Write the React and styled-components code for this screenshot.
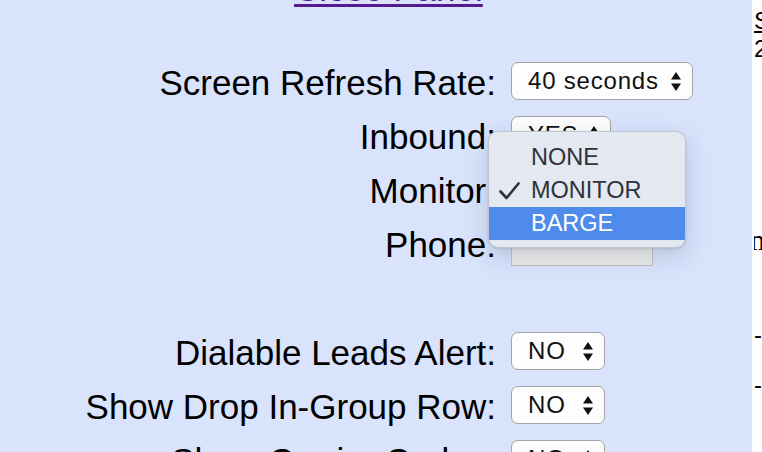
import React from "react";
import styled, { createGlobalStyle } from "styled-components";

const Global = createGlobalStyle`
  html, body { margin: 0; padding: 0; background: #ffffff; overflow: hidden; }
  body { font-family: "Liberation Sans", Arial, sans-serif; }
`;

const Page = styled.div`
  display: flex;
  width: 762px;
  height: 452px;
  overflow: hidden;
`;

const Panel = styled.div`
  width: 752px;
  flex: 0 0 752px;
  background: #d9e3fc;
  overflow: hidden;
`;

const Scroller = styled.div`
  margin-top: -31px;
  display: flex;
  flex-direction: column;
`;

const CloseRow = styled.div`
  height: 40px;
  padding-left: 294px;
  margin-bottom: 47px;
  font-size: 35px;
  line-height: 40px;
`;

const CloseLink = styled.a`
  color: #551a8b;
  text-decoration: underline;
  text-decoration-thickness: 3px;
  text-underline-offset: 3px;
  cursor: pointer;
`;

const Form = styled.div`
  display: grid;
  grid-template-columns: 496px 1fr;
  column-gap: 15px;
  grid-auto-rows: 54px;
  align-items: center;
`;

const Label = styled.div`
  text-align: right;
  font-size: 35px;
  line-height: 40px;
  color: #000;
  white-space: nowrap;
`;

const Cell = styled.div`
  position: relative;
  display: flex;
  align-items: center;
  height: 100%;
`;

const SelectBox = styled.div`
  box-sizing: border-box;
  width: ${(p) => p.$w}px;
  height: 38px;
  margin-bottom: 4px;
  display: flex;
  align-items: center;
  justify-content: space-between;
  padding: 0 11px 0 16px;
  border: 1.5px solid #a3a3a3;
  border-radius: 7px;
  background: #fdfdfd;
  font-size: 24px;
  letter-spacing: 0.8px;
  color: #111;
  white-space: nowrap;
`;

const PhoneInput = styled.div`
  box-sizing: border-box;
  width: 142px;
  height: 39px;
  margin-top: 3px;
  background: #ebebeb;
  border: 1px solid #c2c2c2;
  border-top-color: #b0b0b0;
`;

const Menu = styled.div`
  position: absolute;
  left: -23px;
  top: -33px;
  width: 198px;
  box-sizing: border-box;
  padding: 9px 0 7px;
  background: #e3e8f1;
  border: 1px solid rgba(120, 130, 150, 0.35);
  border-radius: 10px;
  box-shadow: 0 8px 24px rgba(40, 50, 80, 0.18), 0 1px 3px rgba(0, 0, 0, 0.12);
  z-index: 5;
  overflow: hidden;
`;

const MenuItem = styled.div`
  height: 33px;
  display: flex;
  align-items: center;
  padding-left: 10px;
  font-size: 23.5px;
  color: ${(p) => (p.$active ? "#ffffff" : "#2d323c")};
  background: ${(p) => (p.$active ? "#4f8bea" : "transparent")};
`;

const CheckSlot = styled.span`
  width: 32px;
  display: flex;
  align-items: center;
`;

const Side = styled.div`
  flex: 1;
  background: #ffffff;
  overflow: hidden;
  font-family: "Liberation Sans", Arial, sans-serif;
  padding-top: 7px;
  display: flex;
  flex-direction: column;
  margin-left: 2px;
`;

const SideLink = styled.span`
  font-size: 24px;
  line-height: 28px;
  text-decoration: underline;
  color: #000;
`;

const SideText = styled.span`
  font-size: ${(p) => p.$size || 24}px;
  line-height: ${(p) => (p.$size || 24) + 4}px;
  color: #000;
  margin-top: ${(p) => p.$mt || 0}px;
  margin-left: ${(p) => p.$ml || 0}px;
  font-family: ${(p) => (p.$serif ? '"Liberation Serif", "Times New Roman", serif' : "inherit")};
`;

const Arrows = () => (
  <svg width="10" height="19" viewBox="0 0 10 19">
    <polygon points="5,0 10,7.5 0,7.5" fill="#111" />
    <polygon points="0,11.5 10,11.5 5,19" fill="#111" />
  </svg>
);

const Check = () => (
  <svg width="21" height="18" viewBox="0 0 21 18">
    <polyline points="1.5,9.5 7.5,16 19.5,1.5" fill="none" stroke="#2d323c" strokeWidth="2.6" strokeLinecap="round" strokeLinejoin="round" />
  </svg>
);

const Select = ({ value, w }) => (
  <SelectBox $w={w}>
    <span>{value}</span>
    <Arrows />
  </SelectBox>
);

const options = ["NONE", "MONITOR", "BARGE"];

export default function App() {
  return (
    <>
      <Global />
      <Page>
        <Panel>
          <Scroller>
            <CloseRow>
              <CloseLink>Close Panel</CloseLink>
            </CloseRow>
            <Form>
              <Label>Screen Refresh Rate:</Label>
              <Cell>
                <Select value="40 seconds" w={182} />
              </Cell>

              <Label>Inbound:</Label>
              <Cell>
                <Select value="YES" w={100} />
              </Cell>

              <Label>Monitor:</Label>
              <Cell>
                <Select value="MONITOR" w={150} />
                <Menu>
                  {options.map((o) => (
                    <MenuItem key={o} $active={o === "BARGE"}>
                      <CheckSlot>{o === "MONITOR" ? <Check /> : null}</CheckSlot>
                      {o}
                    </MenuItem>
                  ))}
                </Menu>
              </Cell>

              <Label>Phone:</Label>
              <Cell>
                <PhoneInput />
              </Cell>

              <Label />
              <Cell />

              <Label>Dialable Leads Alert:</Label>
              <Cell>
                <Select value="NO" w={94} />
              </Cell>

              <Label>Show Drop In-Group Row:</Label>
              <Cell>
                <Select value="NO" w={94} />
              </Cell>

              <Label>Show Carrier Codes:</Label>
              <Cell>
                <Select value="NO" w={94} />
              </Cell>
            </Form>
          </Scroller>
        </Panel>
        <Side>
          <SideLink>S</SideLink>
          <SideText>2</SideText>
          <SideText $serif $size={30} $mt={160} $ml={-4}>m</SideText>
          <SideText $mt={64}>-</SideText>
          <SideText $mt={22}>-</SideText>
        </Side>
      </Page>
    </>
  );
}
